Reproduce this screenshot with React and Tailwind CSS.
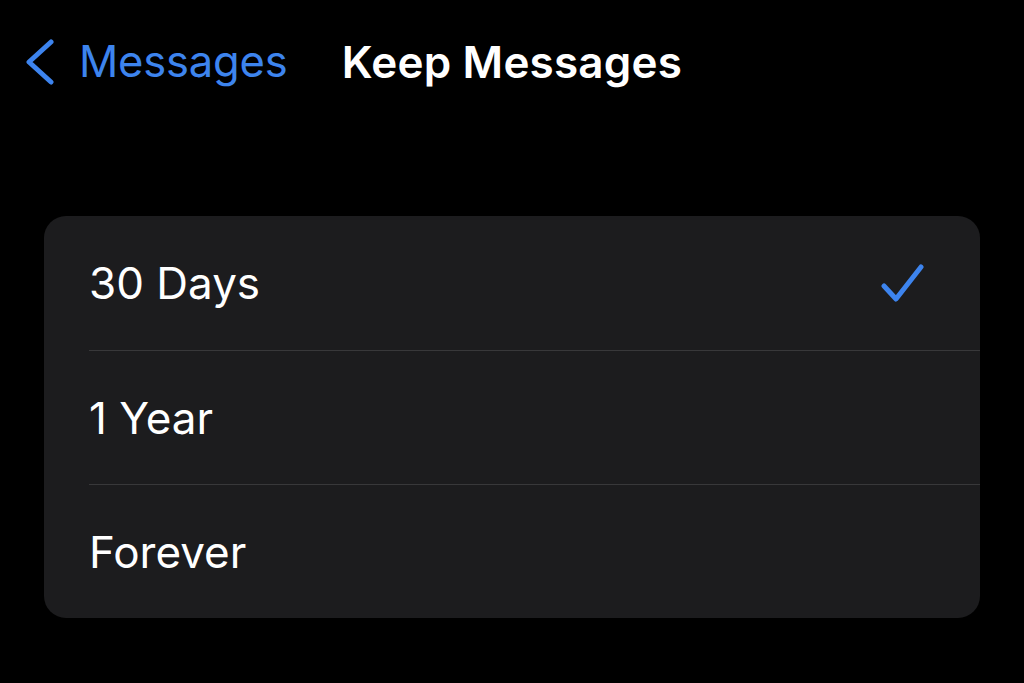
export default function App() {
  const options = [
    { id: "30d", label: "30 Days", selected: true },
    { id: "1y", label: "1 Year", selected: false },
    { id: "forever", label: "Forever", selected: false },
  ];

  return (
    <div
      className="w-[1024px] h-[683px] bg-black text-white overflow-hidden"
      style={{ fontFamily: "Inter, 'Noto Sans', sans-serif" }}
    >
      {/* Nav bar */}
      <div className="grid grid-cols-[1fr_auto_1fr] items-center h-[124px]">
        <div className="flex items-center pl-[24px] text-[#3d84ee]">
          <svg width="32" height="46" viewBox="0 0 32 46" fill="none">
            <path
              d="M27 3 L5 23 L27 43"
              stroke="currentColor"
              strokeWidth="5"
              strokeLinecap="round"
              strokeLinejoin="round"
            />
          </svg>
          <span className="ml-[23px] text-[43.5px] leading-none tracking-[-0.2px]">Messages</span>
        </div>
        <div className="text-[44px] font-semibold leading-none tracking-[0.2px]">Keep Messages</div>
        <div />
      </div>

      {/* Options list */}
      <div className="mt-[92px] mx-[44px] rounded-[22px] bg-[#1c1c1e] overflow-hidden">
        {options.map((o, i) => (
          <div key={o.id} className="pl-[45px]">
            <div
              className={`flex items-center justify-between h-[134px] pr-[55px] ${
                i > 0 ? "border-t border-[#38383a]" : ""
              }`}
            >
              <span className="text-[44px] leading-none tracking-[0px]">{o.label}</span>
              {o.selected && (
                <svg width="44" height="40" viewBox="0 0 44 40" fill="none" className="text-[#3d84ee]">
                  <path
                    d="M3 23 L15 36 L40 4"
                    stroke="currentColor"
                    strokeWidth="5"
                    strokeLinecap="round"
                    strokeLinejoin="round"
                  />
                </svg>
              )}
            </div>
          </div>
        ))}
      </div>
    </div>
  );
}
